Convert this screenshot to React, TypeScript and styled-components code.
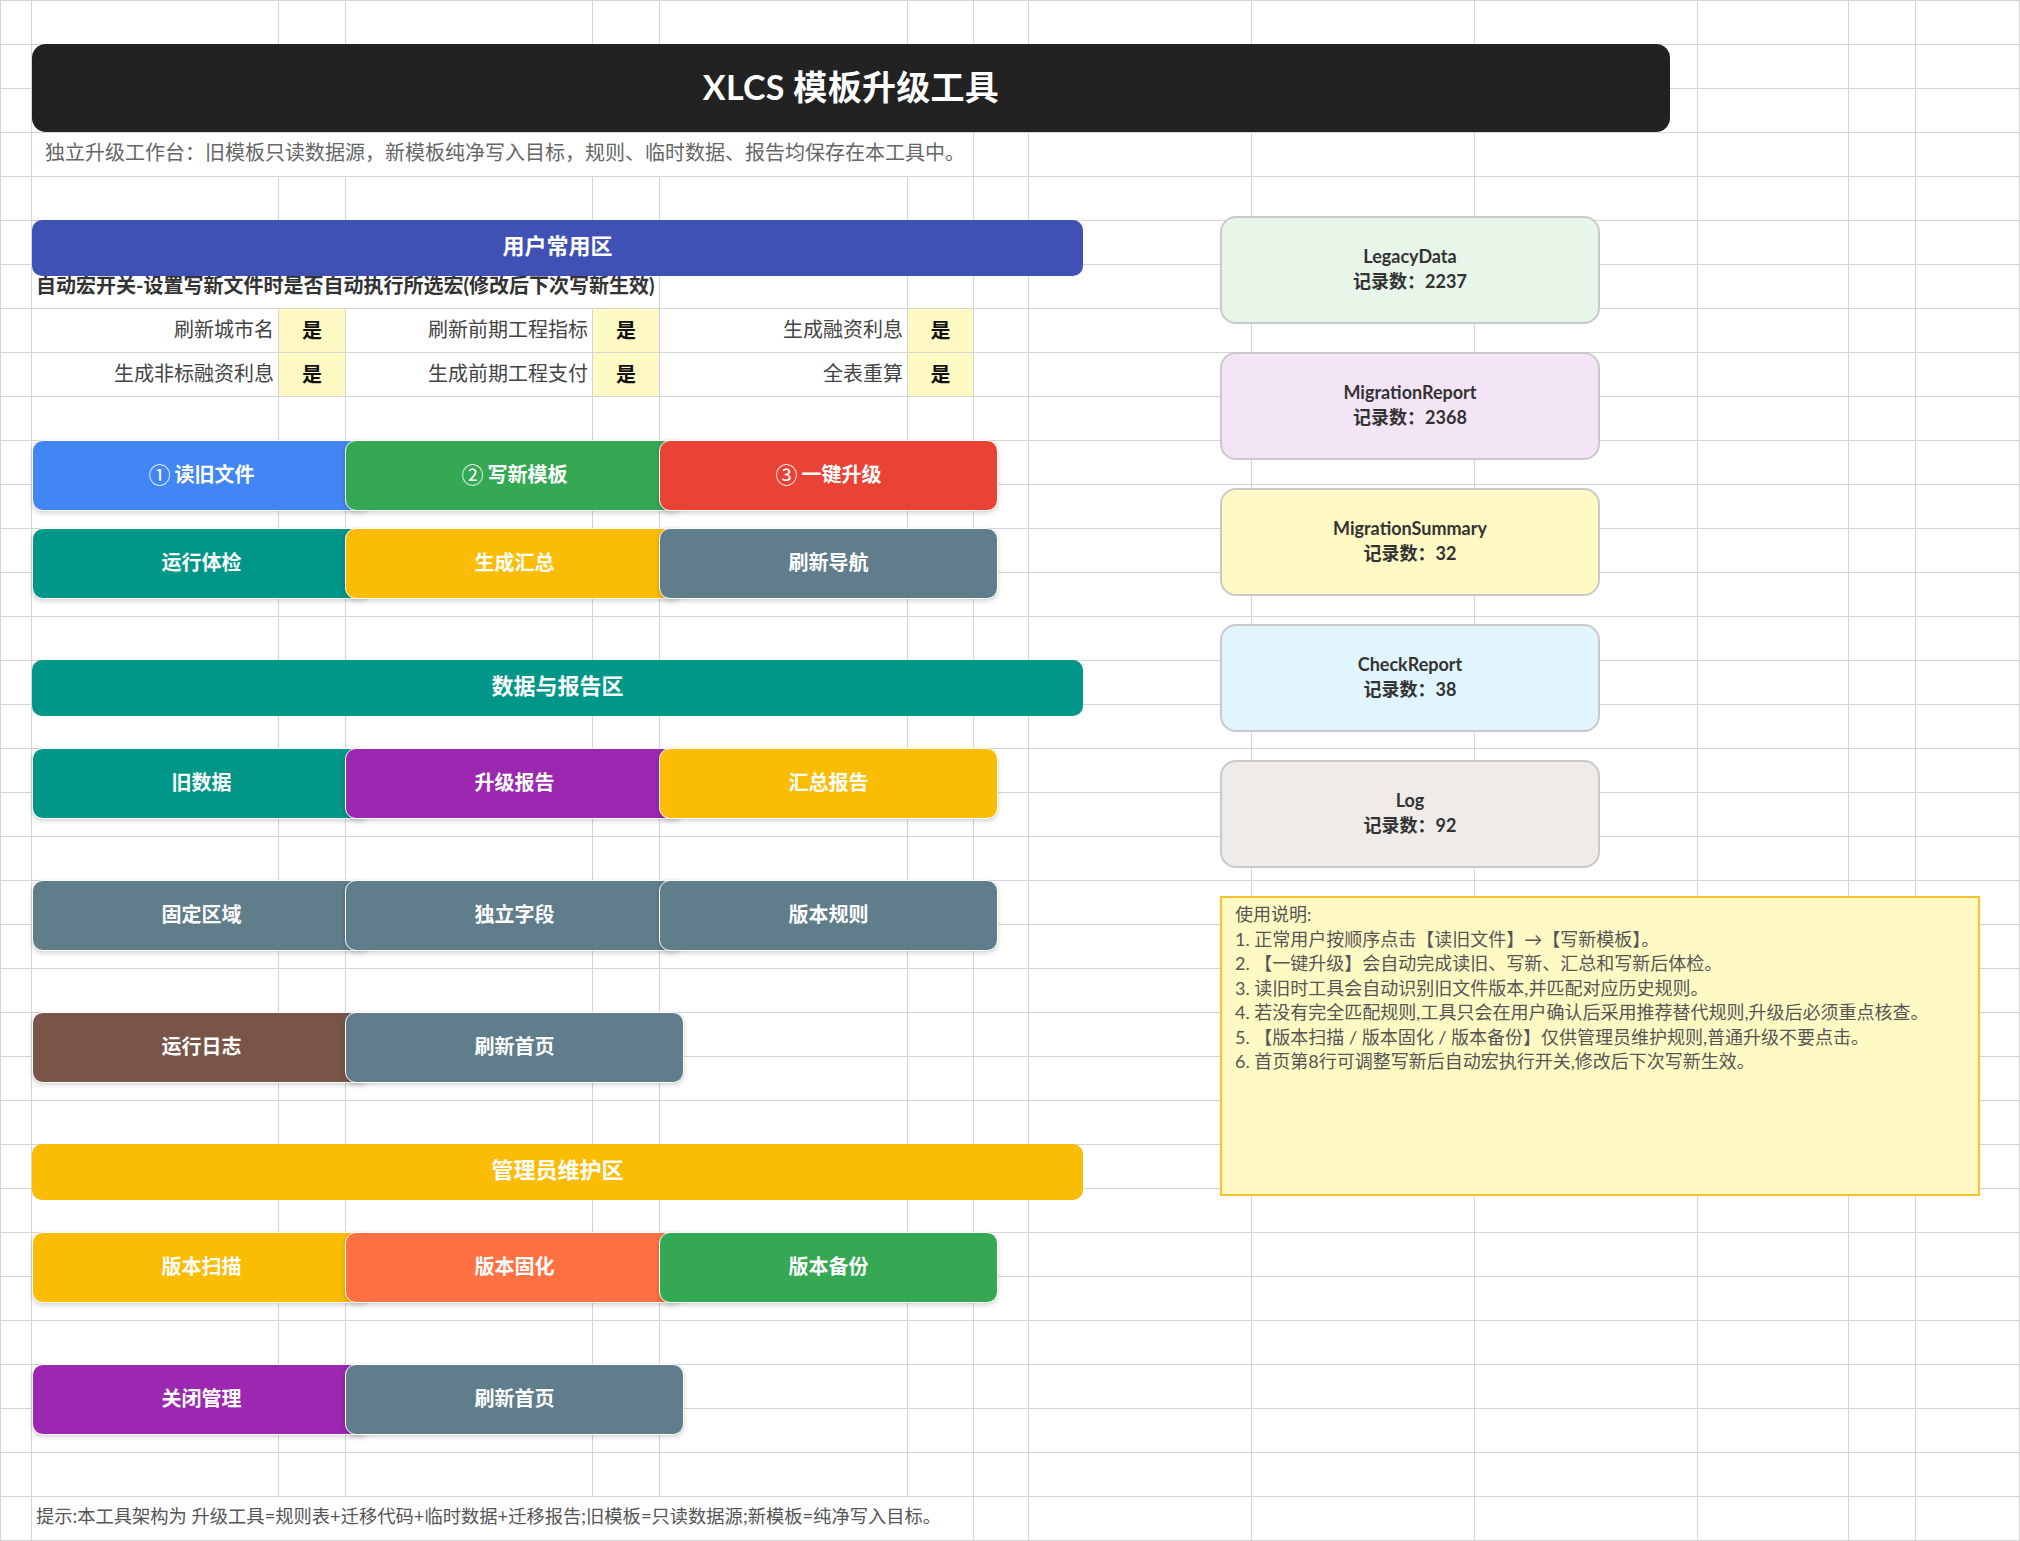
import React from "react";
import styled, { createGlobalStyle, css } from "styled-components";

// sheet geometry, in px, read off the reference
const COLS = [31, 247, 67, 247, 67, 248, 66, 55, 223, 223, 223, 151, 67, 105];
const ROW_H = 44;
const ROWS = 35;
const LINE = "#d4d4d4";

const GlobalStyle = createGlobalStyle`
  *, *::before, *::after { box-sizing: border-box; }
  html, body { margin: 0; padding: 0; background: #fff; }
  body {
    width: 2020px;
    height: 1541px;
    overflow: hidden;
    font-family: "Lato", "Noto Sans CJK SC", sans-serif;
  }
`;

interface PlaceProps {
  $r: string | number;
  $c: string | number;
}

const placed = css<PlaceProps>`
  grid-row: ${(p) => p.$r};
  grid-column: ${(p) => p.$c};
`;

const Sheet = styled.div`
  display: grid;
  grid-template-columns: ${COLS.map((w) => `${w}px`).join(" ")};
  grid-template-rows: repeat(${ROWS}, ${ROW_H}px) 1px;
  width: 2020px;
  height: 1541px;
  background-image: repeating-linear-gradient(
    to bottom,
    ${LINE} 0 1px,
    transparent 1px ${ROW_H}px
  );
`;

const ColumnLine = styled.div<{ $col: number; $last?: boolean }>`
  grid-row: 1 / -1;
  grid-column: ${(p) => p.$col};
  border-left: 1px solid ${LINE};
  ${(p) => p.$last && `border-right: 1px solid ${LINE};`}
`;

const TitleBar = styled.div<PlaceProps>`
  ${placed};
  margin: 0 27px 0 1px;
  padding-bottom: 5px;
  z-index: 2;
  display: flex;
  align-items: center;
  justify-content: center;
  background: #222222;
  border-radius: 14px;
  color: #fff;
  font-size: 34px;
  font-weight: 700;
  letter-spacing: 0.3px;
`;

// text that spills over neighbouring cells hides their grid lines, like Excel does
const SpillText = styled.div<PlaceProps & { $size: number; $bold?: boolean; $color: string; $pad: number }>`
  ${placed};
  margin: 1px 0 0 1px;
  z-index: 1;
  display: flex;
  align-items: center;
  padding: 0 0 ${(p) => (p.$bold ? 5 : 7)}px ${(p) => p.$pad}px;
  background: #fff;
  white-space: nowrap;
  font-size: ${(p) => p.$size}px;
  font-weight: ${(p) => (p.$bold ? 700 : 400)};
  color: ${(p) => p.$color};
`;

const SectionBar = styled.div<PlaceProps & { $bg: string }>`
  ${placed};
  align-self: start;
  justify-self: start;
  width: 1051px;
  height: 56px;
  margin-left: 1px;
  padding-bottom: 8px;
  z-index: 3;
  display: flex;
  align-items: center;
  justify-content: center;
  background: ${(p) => p.$bg};
  border-radius: 10px;
  color: #fff;
  font-size: 22px;
  font-weight: 700;
`;

const ToggleLabel = styled.div<PlaceProps>`
  ${placed};
  display: flex;
  align-items: center;
  justify-content: flex-end;
  padding: 0 4px 3px 0;
  font-size: 20px;
  color: #444;
  white-space: nowrap;
`;

const ToggleValue = styled.div<PlaceProps>`
  ${placed};
  margin: 1px 0 0 1px;
  padding-bottom: 3px;
  display: flex;
  align-items: center;
  justify-content: center;
  background: #fff9c4;
  font-size: 20px;
  font-weight: 700;
  color: #111;
`;

const ActionButton = styled.button<PlaceProps & { $bg: string }>`
  ${placed};
  align-self: start;
  justify-self: start;
  width: 339px;
  height: 71px;
  margin: 0 0 0 ${(p) => (p.$c === 2 ? 1 : 0)}px;
  z-index: 2;
  display: flex;
  align-items: center;
  justify-content: center;
  padding: 0 0 5px;
  background: ${(p) => p.$bg};
  border: 1.5px solid #fff;
  border-radius: 11px;
  box-shadow: 0 2px 5px rgba(0, 0, 0, 0.18);
  color: #fff;
  font-family: inherit;
  font-size: 20px;
  font-weight: 700;
  cursor: pointer;
`;

const StepMark = styled.span`
  font-family: "Noto Sans CJK SC", sans-serif;
  font-weight: 400;
  font-size: 22px;
  margin-right: 4px;
`;

const RightStack = styled.div<PlaceProps>`
  ${placed};
  align-self: start;
  justify-self: start;
  margin: 40px 0 0 192px;
  z-index: 2;
  display: flex;
  flex-direction: column;
  align-items: flex-start;
  gap: 28px;
`;

const TableCard = styled.div<{ $bg: string }>`
  width: 380px;
  height: 108px;
  padding-bottom: 3px;
  display: flex;
  flex-direction: column;
  align-items: center;
  justify-content: center;
  background: ${(p) => p.$bg};
  border: 2px solid #c9c9c9;
  border-radius: 16px;
  color: #333;
  font-size: 18px;
  font-weight: 700;
  line-height: 25px;
`;

const NotesBox = styled.div`
  width: 760px;
  height: 300px;
  padding: 4px 13px;
  background: #fff9c4;
  border: 2.5px solid #fbc02d;
  color: #555;
  font-size: 18px;
  line-height: 24.5px;
  white-space: nowrap;
`;

const toggles = [
  ["刷新城市名", "刷新前期工程指标", "生成融资利息"],
  ["生成非标融资利息", "生成前期工程支付", "全表重算"],
];

const C = {
  blue: "#4285F4",
  green: "#34A853",
  red: "#EA4335",
  teal: "#009688",
  amber: "#FBBC04",
  slate: "#607D8B",
  purple: "#9C27B0",
  brown: "#795548",
  orange: "#FF7043",
  indigo: "#3F51B5",
};

type Btn = [string, string, string?];

const buttonRows: { row: number; items: Btn[] }[] = [
  { row: 11, items: [["读旧文件", C.blue, "①"], ["写新模板", C.green, "②"], ["一键升级", C.red, "③"]] },
  { row: 13, items: [["运行体检", C.teal], ["生成汇总", C.amber], ["刷新导航", C.slate]] },
  { row: 18, items: [["旧数据", C.teal], ["升级报告", C.purple], ["汇总报告", C.amber]] },
  { row: 21, items: [["固定区域", C.slate], ["独立字段", C.slate], ["版本规则", C.slate]] },
  { row: 24, items: [["运行日志", C.brown], ["刷新首页", C.slate]] },
  { row: 29, items: [["版本扫描", C.amber], ["版本固化", C.orange], ["版本备份", C.green]] },
  { row: 32, items: [["关闭管理", C.purple], ["刷新首页", C.slate]] },
];

const sections: [number, string, string][] = [
  [6, "用户常用区", C.indigo],
  [16, "数据与报告区", C.teal],
  [27, "管理员维护区", C.amber],
];

const tables: [string, number, string][] = [
  ["LegacyData", 2237, "#E8F5E9"],
  ["MigrationReport", 2368, "#F3E5F5"],
  ["MigrationSummary", 32, "#FFF9C4"],
  ["CheckReport", 38, "#E1F5FE"],
  ["Log", 92, "#EFEBE9"],
];

const notes = [
  "使用说明:",
  "1. 正常用户按顺序点击【读旧文件】→【写新模板】。",
  "2. 【一键升级】会自动完成读旧、写新、汇总和写新后体检。",
  "3. 读旧时工具会自动识别旧文件版本,并匹配对应历史规则。",
  "4. 若没有完全匹配规则,工具只会在用户确认后采用推荐替代规则,升级后必须重点核查。",
  "5. 【版本扫描 / 版本固化 / 版本备份】仅供管理员维护规则,普通升级不要点击。",
  "6. 首页第8行可调整写新后自动宏执行开关,修改后下次写新生效。",
];

export default function App() {
  return (
    <>
      <GlobalStyle />
      <Sheet>
        {COLS.map((_, i) => (
          <ColumnLine key={i} $col={i + 1} $last={i === COLS.length - 1} />
        ))}

        <TitleBar $r="2 / 4" $c="2 / 12">
          XLCS 模板升级工具
        </TitleBar>
        <SpillText $r={4} $c="2 / 8" $size={20} $color="#666" $pad={13}>
          独立升级工作台：旧模板只读数据源，新模板纯净写入目标，规则、临时数据、报告均保存在本工具中。
        </SpillText>

        {sections.map(([row, label, bg]) => (
          <SectionBar key={label} $r={`${row} / span 2`} $c="2 / 10" $bg={bg}>
            {label}
          </SectionBar>
        ))}

        <SpillText $r={7} $c="2 / 6" $size={20} $bold $color="#333" $pad={4}>
          自动宏开关-设置写新文件时是否自动执行所选宏(修改后下次写新生效)
        </SpillText>

        {toggles.map((row, ri) =>
          row.map((label, ci) => (
            <React.Fragment key={label}>
              <ToggleLabel $r={8 + ri} $c={2 + ci * 2}>
                {label}
              </ToggleLabel>
              <ToggleValue $r={8 + ri} $c={3 + ci * 2}>
                是
              </ToggleValue>
            </React.Fragment>
          ))
        )}

        {buttonRows.map(({ row, items }) =>
          items.map(([label, bg, mark], i) => (
            <ActionButton key={`${row}-${i}`} $r={`${row} / span 2`} $c={2 + i * 2} $bg={bg}>
              {mark && <StepMark>{mark}</StepMark>}
              {label}
            </ActionButton>
          ))
        )}

        <RightStack $r="5 / 30" $c="9 / 15">
          {tables.map(([name, count, bg]) => (
            <TableCard key={name} $bg={bg}>
              <span>{name}</span>
              <span>记录数：{count}</span>
            </TableCard>
          ))}
          <NotesBox>
            {notes.map((line) => (
              <div key={line}>{line}</div>
            ))}
          </NotesBox>
        </RightStack>

        <SpillText $r={35} $c="2 / 8" $size={18.3} $color="#555" $pad={4}>
          提示:本工具架构为 升级工具=规则表+迁移代码+临时数据+迁移报告;旧模板=只读数据源;新模板=纯净写入目标。
        </SpillText>
      </Sheet>
    </>
  );
}
